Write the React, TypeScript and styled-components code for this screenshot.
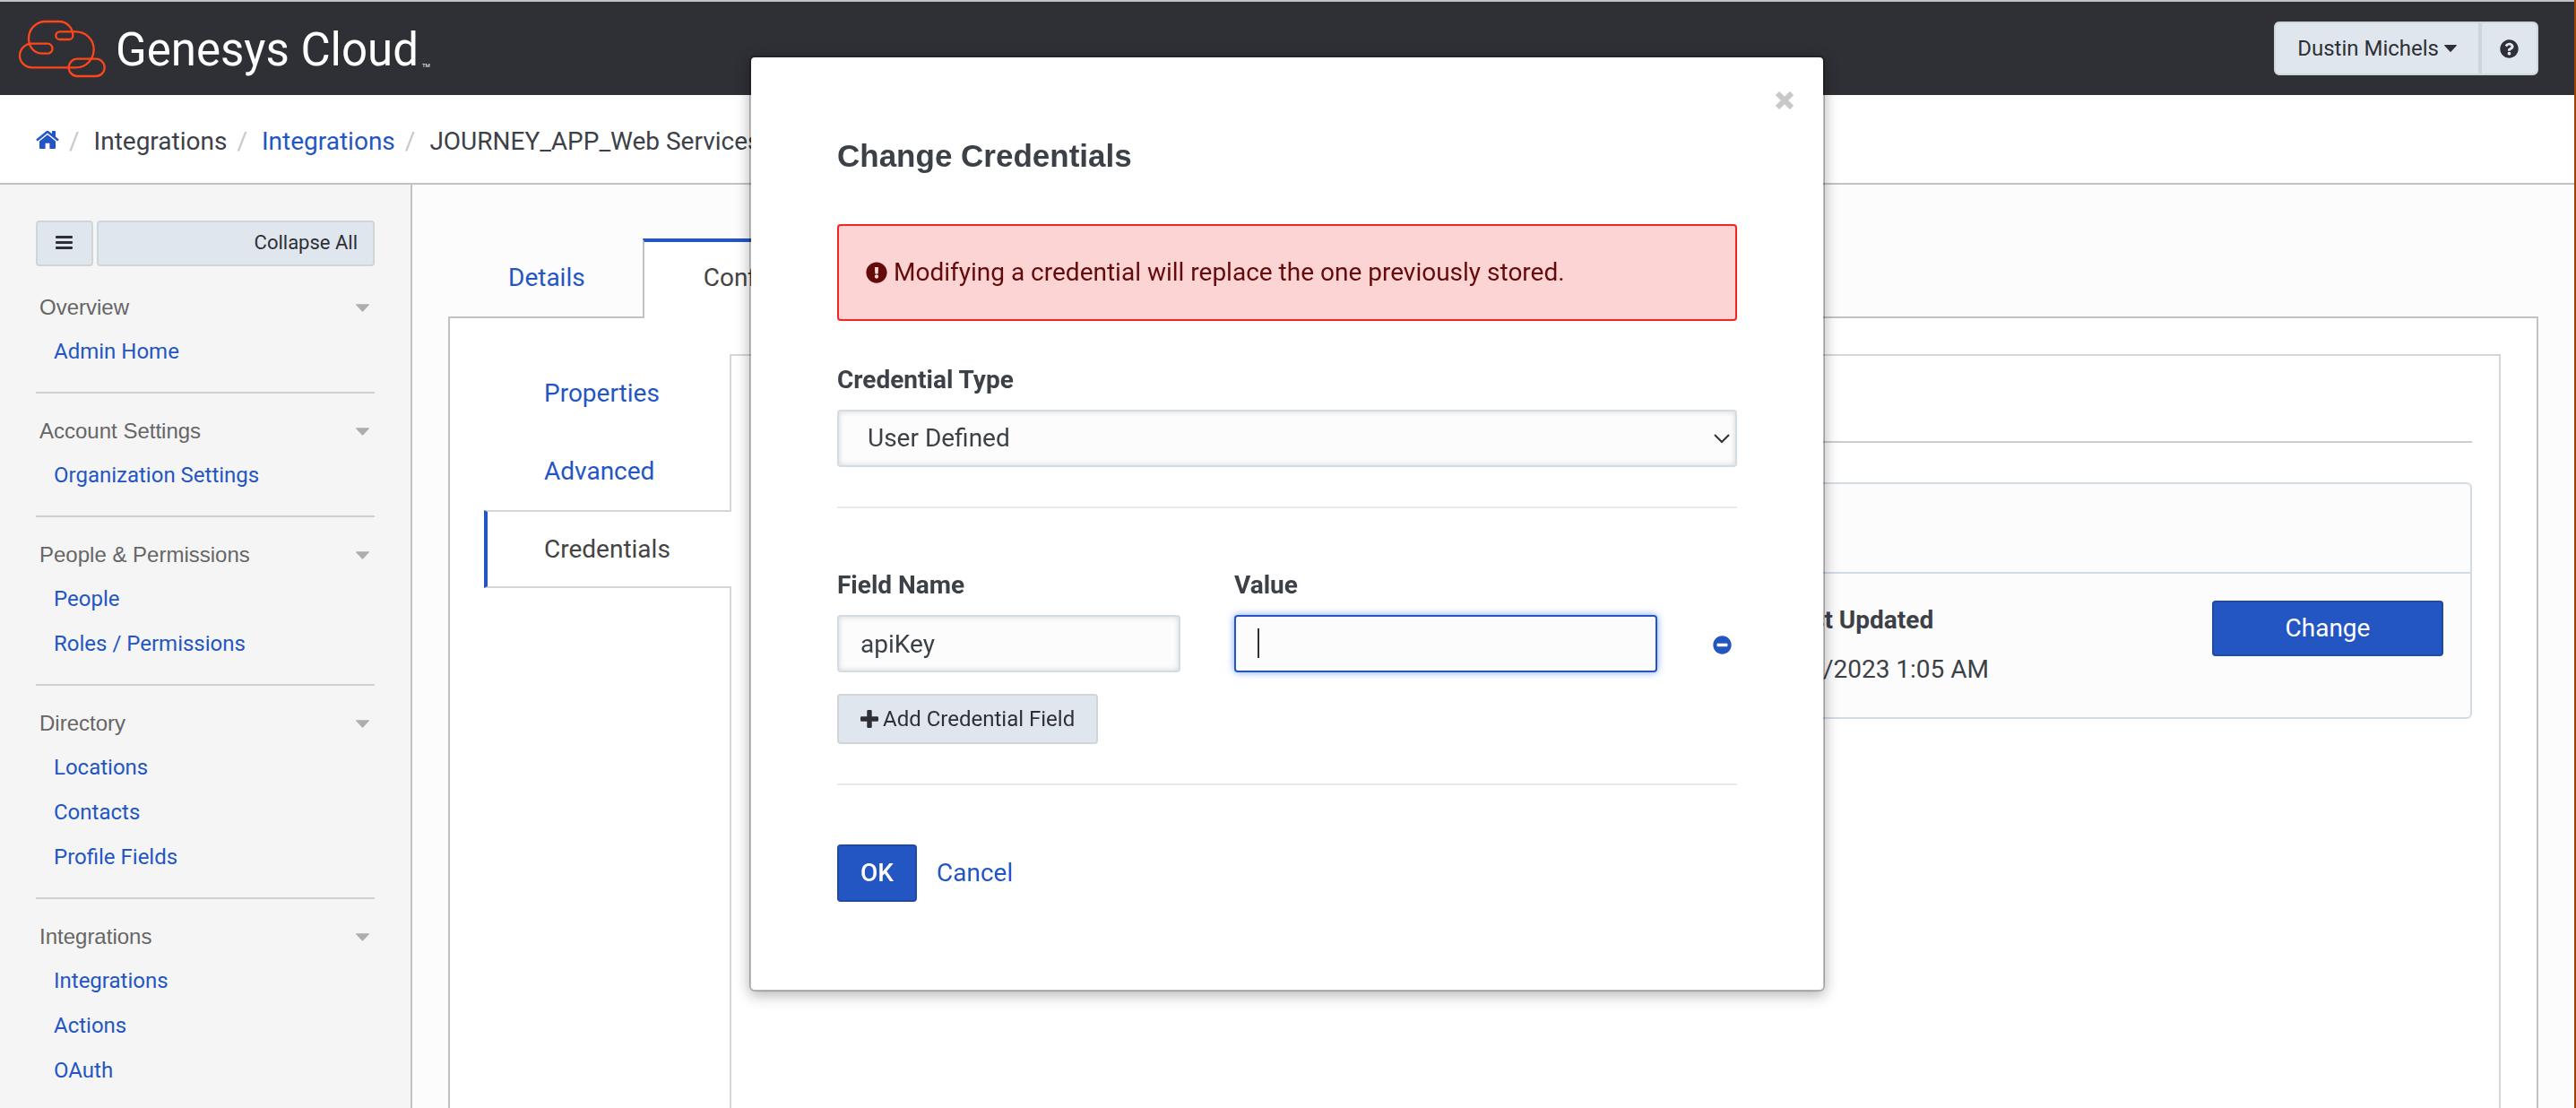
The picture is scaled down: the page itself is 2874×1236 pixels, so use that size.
import React from "react";
import styled, { createGlobalStyle, css } from "styled-components";
import {
  FaExclamationCircle,
  FaQuestionCircle,
  FaMinusCircle,
} from "react-icons/fa";

const color = {
  ink: "#3c4148",
  dark: "#2e3036",
  blue: "#2456c3",
  blueEdge: "#21499c",
  mist: "#dfe6ee",
  mistEdge: "#cfd6da",
  line: "#c2c2c2",
  softLine: "#d6d6d6",
  field: "#d3dce5",
  page: "#fcfcfc",
};

const headingFont = `"Liberation Sans", Arial, sans-serif`;

const GlobalStyle = createGlobalStyle`
  *, *::before, *::after { box-sizing: border-box; }
  body {
    margin: 0;
    background: #fff;
    color: ${color.ink};
    font: 400 28px/40px Roboto, "Liberation Sans", sans-serif;
  }
  #root { display: flow-root; }
  a { color: ${color.blue}; text-decoration: none; }
  button, input, select { font: inherit; color: inherit; margin: 0; }
  button { cursor: pointer; }
  ul, ol { list-style: none; margin: 0; padding: 0; }
  h1, h2, p { margin: 0; font-weight: 400; }
`;

const Page = styled.div`
  display: flex;
  flex-direction: column;
  height: 100vh;
  overflow: hidden;
  border-right: 2px solid #9c4306;
`;

const TopBar = styled.header`
  display: flex;
  align-items: center;
  justify-content: space-between;
  flex: none;
  height: 106px;
  padding: 0 40px 0 20px;
  border-top: 2px solid ${color.line};
  background: ${color.dark};
`;

const Brand = styled.a`
  display: flex;
  align-items: center;
  gap: 11px;
  color: #fff;
  font-size: 51px;
  line-height: 64px;

  svg { width: 98px; height: 66px; }
  span { padding-top: 4px; }
  small { align-self: flex-end; margin-left: -7px; font-size: 6px; line-height: 30px; }
`;

const ButtonGroup = styled.div`
  display: flex;
`;

const BarButton = styled.button`
  display: flex;
  align-items: center;
  gap: 6px;
  height: 60px;
  padding: 0 24px;
  border: 2px solid ${color.mistEdge};
  background: ${color.mist};
  color: ${color.dark};
  font-size: 24px;
  line-height: 32px;

  &:first-child { border-radius: 6px 0 0 6px; }
  &:last-child { border-radius: 0 6px 6px 0; padding: 0 20px; }
`;

const Breadcrumbs = styled.nav`
  flex: none;
  height: 100px;
  padding: 6px 40px 0;
  border-bottom: 2px solid ${color.line};
  background: #fff;

  ol { display: flex; align-items: center; height: 100%; }
  li { display: flex; align-items: center; white-space: nowrap; }
  li + li::before { content: "/"; padding: 0 16px 0 11px; color: #c8c8c8; }
`;

const Body = styled.div`
  display: flex;
  flex: 1;
  min-height: 0;
`;

const Sidebar = styled.nav`
  flex: none;
  width: 460px;
  padding: 40px 40px 0;
  border-right: 2px solid ${color.line};
  background: #f5f5f5;
  font-size: 24px;
  line-height: 32px;
`;

const SidebarTools = styled.div`
  display: flex;
  gap: 4px;
  margin-bottom: 29px;
`;

const ToolButton = styled.button<{ $grow?: boolean }>`
  display: flex;
  align-items: center;
  justify-content: ${(p) => (p.$grow ? "flex-end" : "center")};
  flex: ${(p) => (p.$grow ? "1" : "0 0 64px")};
  height: 51px;
  padding: 0 17px 2px;
  border: 2px solid ${color.mistEdge};
  border-radius: 4px;
  background: ${color.mist};
  color: ${color.dark};
  font-size: 22px;
  line-height: 28px;
`;

const Group = styled.section`
  padding-bottom: 20px;

  & + & { border-top: 2px solid #d0d0d0; padding-top: 25px; }
`;

const GroupTitle = styled.h2`
  display: flex;
  align-items: center;
  justify-content: space-between;
  margin-bottom: 7px;
  padding: 0 6px 0 4px;
  color: #666;
  font-family: ${headingFont};
  font-size: 24px;
  line-height: 34px;

  svg { color: #adadad; }
`;

const GroupLinks = styled.ul`
  padding-left: 20px;

  a { display: block; line-height: 50px; }
`;

const Main = styled.main`
  display: flex;
  flex-direction: column;
  flex: 1;
  min-width: 0;
  padding: 60px 40px 0;
  background: ${color.page};
`;

const Tabs = styled.div`
  position: relative;
  z-index: 1;
  display: flex;
  margin-bottom: -2px;
`;

const Tab = styled.a<{ $active?: boolean }>`
  display: block;
  height: 89px;
  padding: 24px 64px 0 67px;
  ${(p) =>
    p.$active &&
    css`
      padding: 20px 66px 0;
      border: 2px solid ${color.line};
      border-top: 4px solid ${color.blue};
      border-bottom: 0;
      background: #fff;
      color: #444;
    `}
`;

const Panel = styled.section`
  display: flex;
  flex: 1;
  padding: 40px 40px 0 38px;
  border: 2px solid ${color.line};
  border-bottom: 0;
  background: #fff;
`;

const SideTabs = styled.div`
  position: relative;
  z-index: 1;
  flex: none;
  width: 276px;
  margin-right: -2px;
`;

const SideTab = styled.a<{ $active?: boolean }>`
  display: flex;
  align-items: center;
  height: 87px;
  padding-left: 67px;
  ${(p) =>
    p.$active &&
    css`
      padding-left: 63px;
      border: 2px solid ${color.softLine};
      border-left: 4px solid ${color.blue};
      border-right: 0;
      background: #fff;
      color: #444;
    `}
`;

const TabContent = styled.section`
  flex: 1;
  padding: 0 30px;
  border: 2px solid ${color.softLine};
  border-bottom: 0;
`;

const ContentHead = styled.div`
  height: 97px;
  margin-bottom: 44px;
  border-bottom: 2px solid #cdcdcd;
`;

const Card = styled.article`
  border: 2px solid ${color.field};
  border-radius: 6px;
  background: ${color.page};
`;

const CardHead = styled.div`
  height: 100px;
  border-bottom: 2px solid ${color.field};
`;

const CardRow = styled.div`
  display: flex;
  justify-content: flex-end;
  gap: 249px;
  height: 160px;
  padding: 30px;
`;

const Updated = styled.dl`
  margin: 0;
  min-width: 226px;

  dt { font-weight: 700; line-height: 44px; margin-bottom: 11px; }
  dd { margin: 0; line-height: 44px; }
`;

const PrimaryButton = styled.button<{ $wide?: boolean }>`
  height: ${(p) => (p.$wide ? "62px" : "64px")};
  min-width: ${(p) => (p.$wide ? "258px" : "89px")};
  padding: 0 24px;
  border: 2px solid ${color.blueEdge};
  border-radius: 4px;
  background: ${color.blue};
  color: #fff;
  font-weight: ${(p) => (p.$wide ? 400 : 500)};
`;

const Overlay = styled.div`
  position: fixed;
  inset: 0 2px 0 0;
  z-index: 10;
  display: flex;
  align-items: flex-start;
  justify-content: center;
  padding-top: 62px;
`;

const Dialog = styled.section`
  position: relative;
  width: 1200px;
  max-width: 100%;
  padding: 86px 96px 98px;
  border: 2px solid rgba(0, 0, 0, 0.25);
  border-radius: 6px;
  background: #fff;
  background-clip: padding-box;
  box-shadow: 0 4px 16px rgba(0, 0, 0, 0.3);
`;

const CloseButton = styled.button`
  position: absolute;
  top: 38px;
  right: 33px;
  display: flex;
  padding: 0;
  border: 0;
  background: none;
  color: #c8c8c8;
`;

const Title = styled.h1`
  margin-bottom: 52px;
  font-family: ${headingFont};
  font-size: 35px;
  font-weight: 700;
  line-height: 48px;
`;

const Alert = styled.p`
  display: flex;
  align-items: center;
  gap: 7px;
  height: 108px;
  margin-bottom: 46px;
  padding: 0 30px;
  border: 2px solid #f52323;
  border-radius: 4px;
  background: #fdd4d4;
  color: #640a0a;
`;

const Label = styled.label`
  display: block;
  margin-bottom: 13px;
  font-weight: 700;
  line-height: 40px;
`;

const field = css`
  display: block;
  width: 100%;
  height: 64px;
  border: 2px solid ${color.field};
  border-radius: 4px;
  background-color: ${color.page};
  box-shadow: inset 0 0 6px rgba(0, 0, 0, 0.16);
  outline: 0;
`;

const SelectBox = styled.div`
  display: grid;
  align-items: center;

  > * { grid-area: 1 / 1; }
  svg { justify-self: end; margin-right: 8px; pointer-events: none; }
`;

const Select = styled.select`
  ${field}
  appearance: none;
  padding: 0 32px;
`;

const TextField = styled.input`
  ${field}
  padding: 0 24px;

  &[type="password"] {
    border-color: ${color.blue};
    box-shadow: 0 0 8px rgba(36, 100, 245, 0.6);
    caret-color: transparent;
    background-image: linear-gradient(${color.dark}, ${color.dark});
    background-size: 2px 33px;
    background-position: 24px 13px;
    background-repeat: no-repeat;
  }
`;

const Divider = styled.hr`
  margin: 44px 0 66px;
  border: 0;
  border-top: 2px solid #e9e9e9;
`;

const FieldRow = styled.div`
  display: grid;
  grid-template-columns: 383fr 472fr 29fr;
  column-gap: 60px;
  align-items: end;
  margin-bottom: 24px;
`;

const RemoveButton = styled.button`
  display: flex;
  align-items: center;
  justify-content: flex-end;
  height: 64px;
  padding: 2px 6px 0 0;
  border: 0;
  background: none;
  color: ${color.blue};
`;

const AddButton = styled.button`
  display: flex;
  align-items: center;
  gap: 5px;
  height: 56px;
  padding: 0 24px;
  border: 2px solid ${color.mistEdge};
  border-radius: 4px;
  background: ${color.mist};
  color: ${color.dark};
  font-size: 24px;
`;

const Actions = styled.footer`
  display: flex;
  align-items: center;
  gap: 22px;
`;

const Cloud = () => (
  <svg viewBox="58 62 294 198" fill="none" stroke="#ff451a" strokeWidth="7" aria-hidden>
    <path d="M105 145H157A16.5 16.5 0 0 1 157 178H140C112 178 94 155 94 128C94 95 120 71 150 71H196C222 71 242 92 242 118A13 13 0 0 1 229 131H198A13 13 0 0 1 198 105H252C286 105 312 132 312 165C312 198 286 225 252 225H105C82 225 64 207 64 185C64 163 82 145 105 145Z" />
    <rect x="228" y="196" width="120" height="58" rx="29" />
  </svg>
);

const Home = () => (
  <svg width="26" height="22" viewBox="0 0 26 22" fill={color.blue} role="img" aria-label="Home">
    <path d="M13 5.2 4 12.6V20q0 1 1 1h5.6v-6.2h4.8V21H21q1 0 1-1v-7.4z" />
    <path d="M25.4 10.3 22 7.5V1.6q0-.6-.6-.6h-2.8q-.6 0-.6.6v2.6l-3.7-3Q13 .2 11.7 1.2L.6 10.3q-.5.4-.1.8l.9 1q.4.4.8.1L13 3.4l10.8 8.8q.4.3.8-.1l.9-1q.4-.4-.1-.8z" />
  </svg>
);

const Caret = ({ width = 14, height = 8 }: { width?: number; height?: number }) => (
  <svg width={width} height={height} viewBox="0 0 14 8" fill="currentColor" aria-hidden>
    <path d="M.6 0h12.8q.8.3.3 1L7.7 7.6q-.7.6-1.4 0L.3 1Q-.2.3.6 0z" />
  </svg>
);

const Bars = () => (
  <svg width="20" height="18" viewBox="0 0 20 18" fill="currentColor" aria-hidden>
    <rect y="1" width="19" height="3" rx="1" />
    <rect y="7" width="19" height="3" rx="1" />
    <rect y="13" width="19" height="3" rx="1" />
  </svg>
);

const Plus = () => (
  <svg width="20" height="20" viewBox="0 0 20 20" fill="currentColor" aria-hidden>
    <path d="M8.5 0h3q1.2 0 1.2 1.2v6.1h6.1q1.2 0 1.2 1.2v3q0 1.2-1.2 1.2h-6.1v6.1q0 1.2-1.2 1.2h-3q-1.2 0-1.2-1.2v-6.1H1.2Q0 12.7 0 11.5v-3q0-1.2 1.2-1.2h6.1V1.2Q7.3 0 8.5 0z" />
  </svg>
);

const groups = [
  { title: "Overview", links: ["Admin Home"] },
  { title: "Account Settings", links: ["Organization Settings"] },
  { title: "People & Permissions", links: ["People", "Roles / Permissions"] },
  { title: "Directory", links: ["Locations", "Contacts", "Profile Fields"] },
  { title: "Integrations", links: ["Integrations", "Actions", "OAuth"] },
];

export default function App() {
  return (
    <>
      <GlobalStyle />
      <Page>
        <TopBar>
          <Brand href="#">
            <Cloud />
            <span>Genesys Cloud</span>
            <small>TM</small>
          </Brand>
          <ButtonGroup>
            <BarButton type="button">
              Dustin Michels <Caret />
            </BarButton>
            <BarButton type="button" aria-label="Help">
              <FaQuestionCircle size={21} />
            </BarButton>
          </ButtonGroup>
        </TopBar>
        <Breadcrumbs aria-label="Breadcrumb">
          <ol>
            <li><a href="#"><Home /></a></li>
            <li>Integrations</li>
            <li><a href="#">Integrations</a></li>
            <li>JOURNEY_APP_Web Services</li>
          </ol>
        </Breadcrumbs>
        <Body>
          <Sidebar aria-label="Admin">
            <SidebarTools>
              <ToolButton type="button" aria-label="Toggle menu"><Bars /></ToolButton>
              <ToolButton type="button" $grow>Collapse All</ToolButton>
            </SidebarTools>
            {groups.map((g) => (
              <Group key={g.title}>
                <GroupTitle>{g.title}<Caret width={15} height={9} /></GroupTitle>
                <GroupLinks>
                  {g.links.map((l) => (
                    <li key={l}><a href="#">{l}</a></li>
                  ))}
                </GroupLinks>
              </Group>
            ))}
          </Sidebar>
          <Main>
            <Tabs>
              <Tab href="#">Details</Tab>
              <Tab href="#" $active>Configuration</Tab>
            </Tabs>
            <Panel>
              <SideTabs>
                <SideTab href="#">Properties</SideTab>
                <SideTab href="#">Advanced</SideTab>
                <SideTab href="#" $active>Credentials</SideTab>
              </SideTabs>
              <TabContent>
                <ContentHead />
                <Card>
                  <CardHead />
                  <CardRow>
                    <Updated>
                      <dt>Last Updated</dt>
                      <dd>3/7/2023 1:05 AM</dd>
                    </Updated>
                    <PrimaryButton type="button" $wide>Change</PrimaryButton>
                  </CardRow>
                </Card>
              </TabContent>
            </Panel>
          </Main>
        </Body>
      </Page>
      <Overlay>
        <Dialog role="dialog" aria-modal="true" aria-labelledby="dialog-title">
          <CloseButton type="button" aria-label="Close">
            <svg width="20" height="20" viewBox="0 0 20 20" stroke="currentColor" strokeWidth="6">
              <path d="M2 2 18 18M18 2 2 18" />
            </svg>
          </CloseButton>
          <Title id="dialog-title">Change Credentials</Title>
          <Alert role="alert">
            <FaExclamationCircle size={24} />
            Modifying a credential will replace the one previously stored.
          </Alert>
          <Label htmlFor="type">Credential Type</Label>
          <SelectBox>
            <Select id="type" defaultValue="user">
              <option value="user">User Defined</option>
            </Select>
            <svg width="18" height="11" viewBox="0 0 18 11" fill="none" stroke={color.dark} strokeWidth="2" aria-hidden>
              <path d="m1 1 8 8 8-8" />
            </svg>
          </SelectBox>
          <Divider />
          <FieldRow>
            <div>
              <Label htmlFor="name">Field Name</Label>
              <TextField id="name" defaultValue="apiKey" />
            </div>
            <div>
              <Label htmlFor="value">Value</Label>
              <TextField id="value" type="password" />
            </div>
            <RemoveButton type="button" aria-label="Remove field">
              <FaMinusCircle size={21} />
            </RemoveButton>
          </FieldRow>
          <AddButton type="button">
            <Plus />
            Add Credential Field
          </AddButton>
          <Divider />
          <Actions>
            <PrimaryButton type="button">OK</PrimaryButton>
            <a href="#">Cancel</a>
          </Actions>
        </Dialog>
      </Overlay>
    </>
  );
}
